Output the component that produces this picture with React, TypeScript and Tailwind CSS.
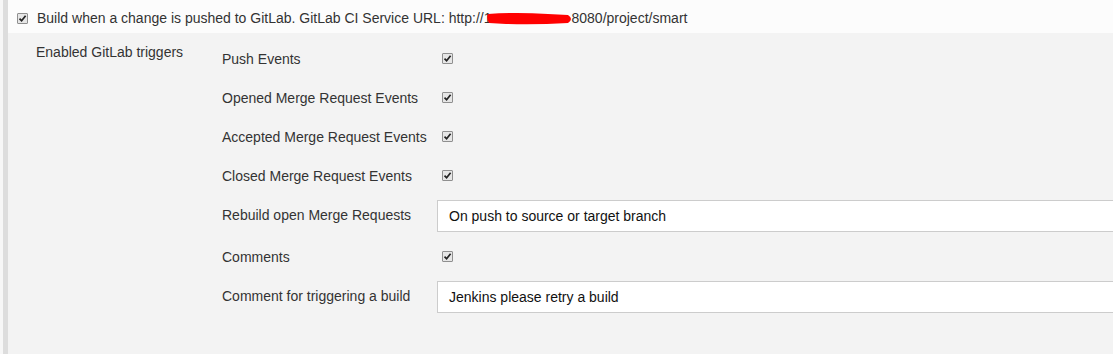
import React from 'react'

const font = { fontFamily: '"Liberation Sans", Arial, sans-serif' }

function Check() {
  return (
    <span className="inline-flex items-center justify-center w-[11px] h-[11px] shrink-0 border border-[#8f8f8f] bg-[#e6e6e6] rounded-[1px]">
      <svg width="9" height="9" viewBox="0 0 9 9">
        <path d="M1.5 4.6 L3.6 6.8 L7.6 1.8" fill="none" stroke="#222" strokeWidth="1.7" />
      </svg>
    </span>
  )
}

const rows: { label: string; kind: 'check' | 'input'; value?: string }[] = [
  { label: 'Push Events', kind: 'check' },
  { label: 'Opened Merge Request Events', kind: 'check' },
  { label: 'Accepted Merge Request Events', kind: 'check' },
  { label: 'Closed Merge Request Events', kind: 'check' },
  { label: 'Rebuild open Merge Requests', kind: 'input', value: 'On push to source or target branch' },
  { label: 'Comments', kind: 'check' },
  { label: 'Comment for triggering a build', kind: 'input', value: 'Jenkins please retry a build' },
]

export default function App() {
  return (
    <div className="flex w-[1113px] h-[354px] overflow-hidden bg-[#f7f7f7] text-[14px] text-[#333]" style={font}>
      <div className="w-[3px] shrink-0" />
      <div className="w-[5px] shrink-0 bg-[#dddddd]" />
      <div className="flex-1 min-w-0 flex flex-col">
        <div className="h-[33px] shrink-0 bg-[#fcfcfc] flex items-center pl-[9px] pt-[4px] gap-[9px] whitespace-nowrap">
          <Check />
          <span className="flex items-center">
            Build when a change is pushed to GitLab. GitLab CI Service URL: http://1
            <svg width="88" height="15" viewBox="0 0 88 15" className="-ml-[5px] -mr-[3px]">
              <path d="M2 3 Q30 1 62 3 L82 4 Q88 8 82 12 Q50 14 20 13 L3 12 Q0 7 2 3 Z" fill="#ff0000" />
            </svg>
            8080/project/smart
          </span>
        </div>
        <div className="flex-1 bg-[#f3f3f3] flex pt-[6px]">
          <div className="w-[214px] shrink-0 pl-[28px] pt-[3px] whitespace-nowrap">Enabled GitLab triggers</div>
          <div className="flex flex-col flex-1 min-w-0">
            {rows.map((r, i) =>
              r.kind === 'check' ? (
                <div key={i} className="flex h-[39px] items-center">
                  <div className="w-[215px] shrink-0 pt-[1px] whitespace-nowrap">{r.label}</div>
                  <div className="pl-[5px] flex items-center">
                    <Check />
                  </div>
                </div>
              ) : (
                <div key={i} className="flex h-[42px] items-center">
                  <div className="w-[215px] shrink-0 pb-[1px] whitespace-nowrap">{r.label}</div>
                  <div className="w-[700px] shrink-0 h-[32px] bg-white border border-[#cccccc] flex items-center pl-[11px] text-[#111] whitespace-nowrap">
                    {r.value}
                  </div>
                </div>
              )
            )}
          </div>
        </div>
      </div>
    </div>
  )
}
